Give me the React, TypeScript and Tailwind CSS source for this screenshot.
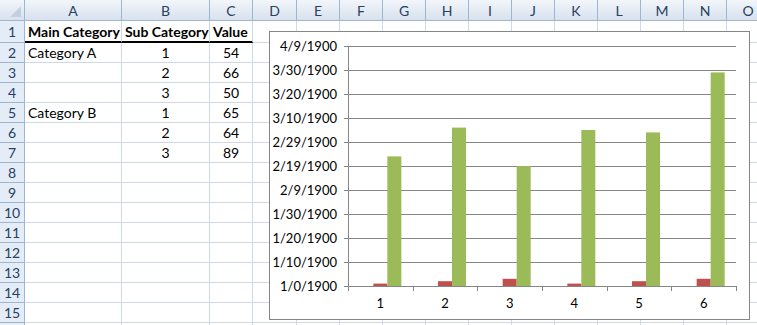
import React from 'react';

const cols = [
    { name: 'A', w: 97 },
    { name: 'B', w: 88 },
    { name: 'C', w: 43 },
    { name: 'D', w: 44 },
    { name: 'E', w: 43 },
    { name: 'F', w: 43 },
    { name: 'G', w: 43 },
    { name: 'H', w: 43 },
    { name: 'I', w: 43 },
    { name: 'J', w: 43 },
    { name: 'K', w: 43 },
    { name: 'L', w: 43 },
    { name: 'M', w: 43 },
    { name: 'N', w: 43 },
    { name: 'O', w: 43 },
];

const data: [string, string, string][] = [
    ['Main Category', 'Sub Category', 'Value'],
    ['Category A', '1', '54'],
    ['', '2', '66'],
    ['', '3', '50'],
    ['Category B', '1', '65'],
    ['', '2', '64'],
    ['', '3', '89'],
];

const subs = [1, 2, 3, 1, 2, 3];
const values = [54, 66, 50, 65, 64, 89];
const yLabels = ['4/9/1900', '3/30/1900', '3/20/1900', '3/10/1900', '2/29/1900', '2/19/1900', '2/9/1900', '1/30/1900', '1/20/1900', '1/10/1900', '1/0/1900'];

const Chart = () => {
    // chart-local coords, plot area 78..466 x, 14..254 y
    const x0 = 78;
    const x1 = 466;
    const yTop = 14;
    const yBot = 254;
    const cat = (x1 - x0) / 6;
    const scale = (yBot - yTop) / 100;

    return (
        <div className="absolute left-[269px] top-[31px] w-[481px] h-[289px] bg-white border border-[#868686]">
            <svg width="479" height="287" className="block">
                {yLabels.map((label, i) => {
                    const y = yTop + i * 24 + 0.5;
                    return (
                        <g key={label}>
                            <line x1={x0 - 4} y1={y} x2={x1} y2={y} stroke="#868686" strokeWidth="1" />
                            <text
                                x={67}
                                y={y + 4.5}
                                textAnchor="end"
                                fontFamily="Lato, 'Liberation Sans', sans-serif"
                                fontSize="13"
                                fill="#000"
                            >
                                {label}
                            </text>
                        </g>
                    );
                })}
                {subs.map((s, i) => {
                    const c = x0 + cat * (i + 0.5);
                    const rh = s * scale;
                    const gh = values[i] * scale;
                    return (
                        <g key={i}>
                            <rect x={c - 7} y={yBot - rh} width="14" height={rh} fill="#C0504D" />
                            <rect x={c + 7} y={yBot - gh} width="14" height={gh} fill="#9BBB59" />
                            <text
                                x={c}
                                y={276}
                                textAnchor="middle"
                                fontFamily="Lato, 'Liberation Sans', sans-serif"
                                fontSize="13"
                                fill="#000"
                            >
                                {i + 1}
                            </text>
                        </g>
                    );
                })}
                <line x1={x0 + 0.5} y1={yTop} x2={x0 + 0.5} y2={yBot + 5} stroke="#868686" strokeWidth="1" />
                {[1, 2, 3, 4, 5, 6].map((i) => (
                    <line
                        key={i}
                        x1={Math.round(x0 + cat * i) + 0.5}
                        y1={yBot}
                        x2={Math.round(x0 + cat * i) + 0.5}
                        y2={yBot + 5}
                        stroke="#868686"
                        strokeWidth="1"
                    />
                ))}
            </svg>
        </div>
    );
};

const App = () => {
    const rows = Array.from({ length: 16 }, (_, i) => i + 1);

    return (
        <div className="relative w-[757px] h-[325px] overflow-hidden bg-white text-[14px] text-black" style={{ fontFamily: "Lato, 'Liberation Sans', sans-serif" }}>
            {/* column headers */}
            <div className="flex h-[21px]">
                <div className="relative w-[25px] shrink-0 border-r border-b border-[#9eb6ce] bg-gradient-to-b from-[#f2f6fb] to-[#d8e1ee]">
                    <div className="absolute right-[3px] bottom-[3px] w-0 h-0 border-l-[11px] border-l-transparent border-b-[11px] border-b-[#c3cfe0]" />
                </div>
                {cols.map((c) => (
                    <div
                        key={c.name}
                        style={{ width: c.w }}
                        className="shrink-0 flex items-center justify-center border-r border-b border-[#9eb6ce] bg-gradient-to-b from-[#f2f6fb] to-[#d8e1ee] text-[14px] text-[#27415f]"
                    >
                        {c.name}
                    </div>
                ))}
            </div>
            {rows.map((r) => {
                const row = data[r - 1];
                return (
                    <div key={r} className={`flex ${r === 1 ? 'h-[22px]' : 'h-[20px]'}`}>
                        <div className="w-[25px] shrink-0 flex items-center justify-center border-r border-b border-[#9eb6ce] bg-[#e4ecf7] text-[14px] text-[#27415f]">
                            {r < 16 ? r : ''}
                        </div>
                        {cols.map((c, ci) => {
                            const text = row && ci < 3 ? row[ci] : '';
                            const first = r === 1 && ci < 3;
                            const left = ci === 0 || first;
                            return (
                                <div
                                    key={c.name}
                                    style={{ width: c.w }}
                                    className={`shrink-0 flex items-center border-r border-r-[#d0d7e5] ${first ? 'border-b-2 border-b-black font-bold' : 'border-b border-b-[#d0d7e5]'} ${left ? 'justify-start pl-[3px]' : 'justify-center'} whitespace-nowrap`}
                                >
                                    {text}
                                </div>
                            );
                        })}
                    </div>
                );
            })}
            <Chart />
        </div>
    );
};

export default App;
